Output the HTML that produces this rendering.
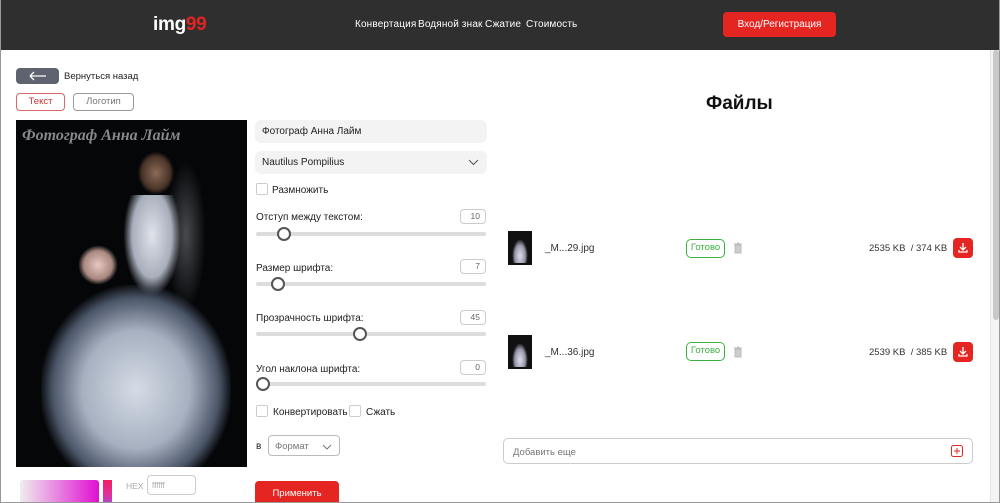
<!DOCTYPE html>
<html><head><meta charset="utf-8"><style>
*{box-sizing:border-box;margin:0;padding:0}
html,body{width:1000px;height:503px;overflow:hidden}
body{background:#fff;font-family:"Liberation Sans",sans-serif;position:relative;color:#222}
.frame{position:absolute;left:0;top:0;width:1000px;height:503px;border:1px solid #999;border-top:none;pointer-events:none}
.hdr{position:absolute;left:0;top:0;width:1000px;height:50px;background:#2f2f2f}
.logo{position:absolute;left:153px;top:14px;color:#fff;font-weight:bold;font-size:19px;letter-spacing:-.3px}
.logo span{color:#e02424}
.nav{position:absolute;top:19px;font-size:10px;color:#fff;letter-spacing:.15px}
.login{position:absolute;left:723px;top:12px;width:113px;height:25px;background:#e52521;border-radius:4px;color:#fff;font-size:10px;text-align:center;line-height:25px}
.a{position:absolute}
.sb{position:absolute;left:990px;top:50px;width:10px;height:453px;background:#f4f4f4;border-left:1px solid #e4e4e4}
.sb div{position:absolute;left:2px;top:0;width:6px;height:270px;background:#c8c8c8;border-radius:3px}
.inp{position:absolute;left:255px;width:232px;height:23px;background:#f3f3f3;border-radius:6px;font-size:10px;padding-left:7px;line-height:23px}
.lbl{position:absolute;left:256px;font-size:10px}
.num{position:absolute;left:460px;width:26px;height:15px;border:1px solid #ccc;border-radius:4px;font-size:8.5px;color:#666;text-align:right;padding-right:5px;line-height:13px}
.trk{position:absolute;left:256px;width:230px;height:4px;background:#ddd;border-radius:2px}
.knob{position:absolute;width:14px;height:14px;border:2.5px solid #555;border-radius:50%;background:#fff;top:-5px}
.cb{position:absolute;width:12px;height:12px;border:1px solid #ccc;border-radius:2px}
.ok{position:absolute;left:686px;width:39px;height:19px;border:1.5px solid #3cb043;border-radius:5px;color:#3cb043;font-size:9.5px;text-align:center;line-height:16px}
.dl{position:absolute;left:953px;width:20px;height:20px;background:#e52521;border-radius:4px}
.fn{position:absolute;left:545px;font-size:10px;color:#333}
.sz{position:absolute;left:869px;font-size:9.5px;color:#333}
.th{position:absolute;left:508px;width:24px;height:34px;background:#111}
.th::after{content:"";position:absolute;left:4px;top:8px;width:16px;height:24px;background:radial-gradient(ellipse at 50% 70%,#dde 0,#99a 45%,transparent 70%)}
</style></head><body>
<div class="hdr"></div>
<div class="logo">img<span>99</span></div>
<div class="nav" style="left:355px">Конвертация</div>
<div class="nav" style="left:418px">Водяной знак</div>
<div class="nav" style="left:485px">Сжатие</div>
<div class="nav" style="left:526px">Стоимость</div>
<div class="login">Вход/Регистрация</div>

<div class="a" style="left:16px;top:68px;width:43px;height:16px;background:#5f6370;border-radius:4px"><svg width="43" height="16"><path d="M14 8h16M14 8l4-4M14 8l4 4" stroke="#fff" stroke-width="1.3" fill="none"/></svg></div>
<div class="a" style="left:64px;top:71px;font-size:9.5px">Вернуться назад</div>
<div class="a" style="left:16px;top:93px;width:49px;height:18px;border:1px solid #d66;border-radius:4px;color:#c33;font-size:9.5px;text-align:center;line-height:16px">Текст</div>
<div class="a" style="left:73px;top:93px;width:61px;height:18px;border:1px solid #999;border-radius:4px;color:#777;font-size:9.5px;text-align:center;line-height:16px">Логотип</div>

<div class="a" style="left:16px;top:120px;width:231px;height:347px;background:#050608;overflow:hidden">
<div class="a" style="left:6px;top:7px;font-family:'Liberation Serif',serif;font-style:italic;font-weight:bold;font-size:16px;color:#888">Фотограф Анна Лайм</div>
<div class="a" style="left:122px;top:32px;width:36px;height:42px;background:radial-gradient(ellipse,#8a6a58 0,#4a3428 55%,transparent 72%)"></div>
<div class="a" style="left:150px;top:40px;width:40px;height:150px;background:radial-gradient(ellipse,rgba(200,200,210,.35) 0,transparent 70%)"></div>
<div class="a" style="left:108px;top:75px;width:56px;height:100px;background:radial-gradient(ellipse at 50% 40%,#e0e3ea 0,#a8aebb 50%,transparent 72%)"></div>
<div class="a" style="left:62px;top:125px;width:40px;height:40px;background:radial-gradient(circle,#e7c8c0 0,#a88880 50%,transparent 70%)"></div>
<div class="a" style="left:25px;top:165px;width:190px;height:190px;background:radial-gradient(ellipse at 50% 55%,#d6dce6 0,#a6b0c0 40%,#4b5568 62%,transparent 72%)"></div>
</div>

<div class="a" style="left:20px;top:480px;width:79px;height:30px;background:linear-gradient(to right,#eee,#e010d0);border-radius:3px"></div>
<div class="a" style="left:103px;top:480px;width:9px;height:30px;background:linear-gradient(#f02060,#e030a0,#8060f0)"></div>
<div class="a" style="left:126px;top:481px;font-size:8.5px;color:#aaa">HEX</div>
<div class="a" style="left:147px;top:475px;width:49px;height:20px;border:1px solid #ccc;border-radius:4px;font-size:8px;color:#aaa;padding:5px 4px">ffffff</div>

<div class="inp" style="top:120px">Фотограф Анна Лайм</div>
<div class="inp" style="top:151px">Nautilus Pompilius<svg class="a" style="right:8px;top:8px" width="11" height="7"><path d="M1 1l4.5 4.5L10 1" stroke="#555" fill="none"/></svg></div>
<div class="cb" style="left:256px;top:183px"></div><div class="lbl" style="left:272px;top:185px">Размножить</div>
<div class="lbl" style="top:212px">Отступ между текстом:</div><div class="num" style="top:209px">10</div>
<div class="trk" style="top:232px"><div class="knob" style="left:21px"></div></div>
<div class="lbl" style="top:263px">Размер шрифта:</div><div class="num" style="top:259px">7</div>
<div class="trk" style="top:282px"><div class="knob" style="left:15px"></div></div>
<div class="lbl" style="top:313px">Прозрачность шрифта:</div><div class="num" style="top:310px">45</div>
<div class="trk" style="top:332px"><div class="knob" style="left:97px"></div></div>
<div class="lbl" style="top:364px">Угол наклона шрифта:</div><div class="num" style="top:360px">0</div>
<div class="trk" style="top:382px"><div class="knob" style="left:0"></div></div>
<div class="cb" style="left:256px;top:405px"></div><div class="lbl" style="left:273px;top:407px">Конвертировать</div>
<div class="cb" style="left:349px;top:405px"></div><div class="lbl" style="left:366px;top:407px">Сжать</div>
<div class="lbl" style="top:441px">в</div>
<div class="a" style="left:268px;top:435px;width:72px;height:21px;border:1px solid #bbb;border-radius:4px;font-size:9.5px;color:#777;padding:5px 6px">Формат<svg class="a" style="right:7px;top:8px" width="10" height="6"><path d="M1 1l4 4 4-4" stroke="#777" fill="none"/></svg></div>
<div class="a" style="left:255px;top:481px;width:84px;height:25px;background:#e52521;border-radius:4px;color:#fff;font-size:9.5px;text-align:center;line-height:25px">Применить</div>

<div class="a" style="left:706px;top:93px;font-size:19px;font-weight:bold;color:#111">Файлы</div>
<div class="th" style="top:231px"></div><div class="fn" style="top:243px">_M...29.jpg</div>
<div class="ok" style="top:239px">Готово</div>
<svg class="a" style="left:733px;top:242px" width="10" height="12"><path d="M1 2h8M4 1h2M2 3h6v8H2z" stroke="#bbb" fill="#ccc"/></svg>
<div class="sz" style="top:243px">2535 KB&nbsp; / 374 KB</div>
<div class="dl" style="top:238px"><svg width="20" height="20"><path d="M10 5v7M7 9l3 3 3-3M6 12v2h8v-2" stroke="#fff" stroke-width="1.3" fill="none"/></svg></div>
<div class="th" style="top:335px"></div><div class="fn" style="top:347px">_M...36.jpg</div>
<div class="ok" style="top:342px">Готово</div>
<svg class="a" style="left:733px;top:346px" width="10" height="12"><path d="M1 2h8M4 1h2M2 3h6v8H2z" stroke="#bbb" fill="#ccc"/></svg>
<div class="sz" style="top:347px">2539 KB&nbsp; / 385 KB</div>
<div class="dl" style="top:342px"><svg width="20" height="20"><path d="M10 5v7M7 9l3 3 3-3M6 12v2h8v-2" stroke="#fff" stroke-width="1.3" fill="none"/></svg></div>

<div class="a" style="left:503px;top:438px;width:470px;height:26px;border:1px solid #ccc;border-radius:5px;font-size:9.5px;color:#777;padding:8px 9px">Добавить еще
<svg class="a" style="right:9px;top:6px" width="12" height="12"><rect x=".5" y=".5" width="11" height="11" rx="2" stroke="#e52521" fill="none"/><path d="M6 3v6M3 6h6" stroke="#e52521"/></svg></div>
<div class="sb"><div></div></div>
<div class="frame"></div>
</body></html>
